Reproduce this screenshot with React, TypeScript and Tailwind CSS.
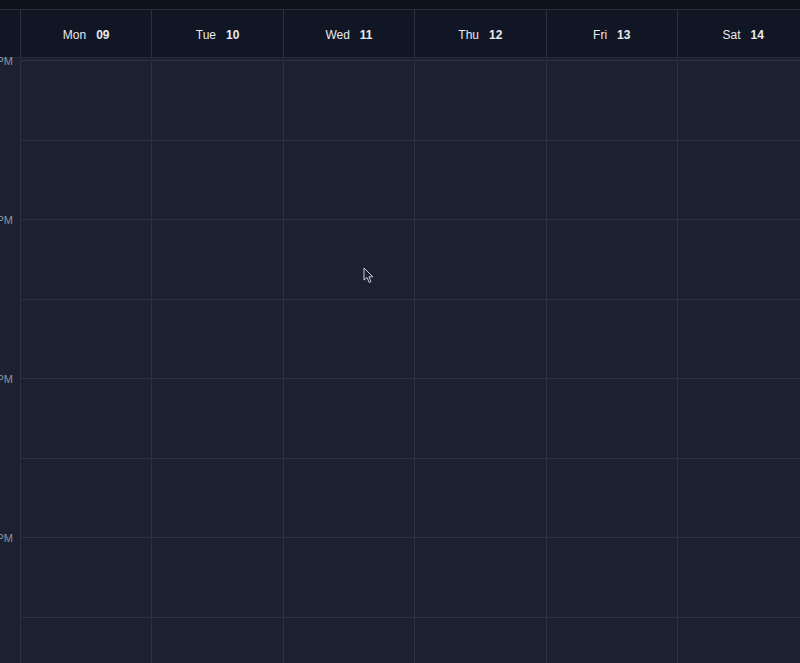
import React from "react";

const days = [
  { name: "Mon", num: "09" },
  { name: "Tue", num: "10" },
  { name: "Wed", num: "11" },
  { name: "Thu", num: "12" },
  { name: "Fri", num: "13" },
  { name: "Sat", num: "14" },
];

const hours = ["12 PM", "1 PM", "2 PM", "3 PM", "4 PM"];
const rows = Array.from({ length: 9 });

export default function App() {
  return (
    <div
      className="h-[663px] w-[800px] overflow-hidden bg-[#1b2130] relative"
      style={{ fontFamily: "'Liberation Sans', Arial, sans-serif" }}
    >
      <div className="h-[10px] bg-[#0e121c] border-b border-[#262c38]" />

      {/* header */}
      <div className="flex h-[48px] bg-[#111624] border-b border-[#242a36]">
        <div className="w-[21px] shrink-0 border-r border-[#2a303d]" />
        {days.map((d) => (
          <div
            key={d.name}
            className="w-[131.4px] shrink-0 flex items-center justify-center gap-[10px] pt-[3px] border-r border-[#2a303d] text-[12px] text-[#e8eaee]"
          >
            <span>{d.name}</span>
            <span className="font-bold">{d.num}</span>
          </div>
        ))}
      </div>

      {/* body */}
      <div className="flex pt-[2px] bg-[#1b2130]">
        <div className="w-[21px] shrink-0 border-r border-[#2c3240] relative">
          {hours.map((h, i) => (
            <div
              key={h}
              className="absolute right-[7px] text-[11px] leading-none text-[#8d94a2] whitespace-nowrap"
              style={{ top: i * 159 - 4 }}
            >
              {h}
            </div>
          ))}
        </div>
        {days.map((d) => (
          <div key={d.name} className="w-[131.4px] shrink-0 border-r border-[#2c3240]">
            {rows.map((_, i) => (
              <div key={i} className="h-[79.5px] border-t border-[#2c3240]" />
            ))}
          </div>
        ))}
      </div>

      {/* cursor */}
      <svg
        className="absolute left-[363px] top-[267px]"
        width="11"
        height="17"
        viewBox="0 0 11 17"
      >
        <path
          d="M1 1 L1 13 L4 10.5 L6.2 15.5 L8 14.7 L5.9 9.8 L9.8 9.8 Z"
          fill="#1b2130"
          stroke="#c9ccd2"
          strokeWidth="1"
          strokeLinejoin="round"
        />
      </svg>
    </div>
  );
}
